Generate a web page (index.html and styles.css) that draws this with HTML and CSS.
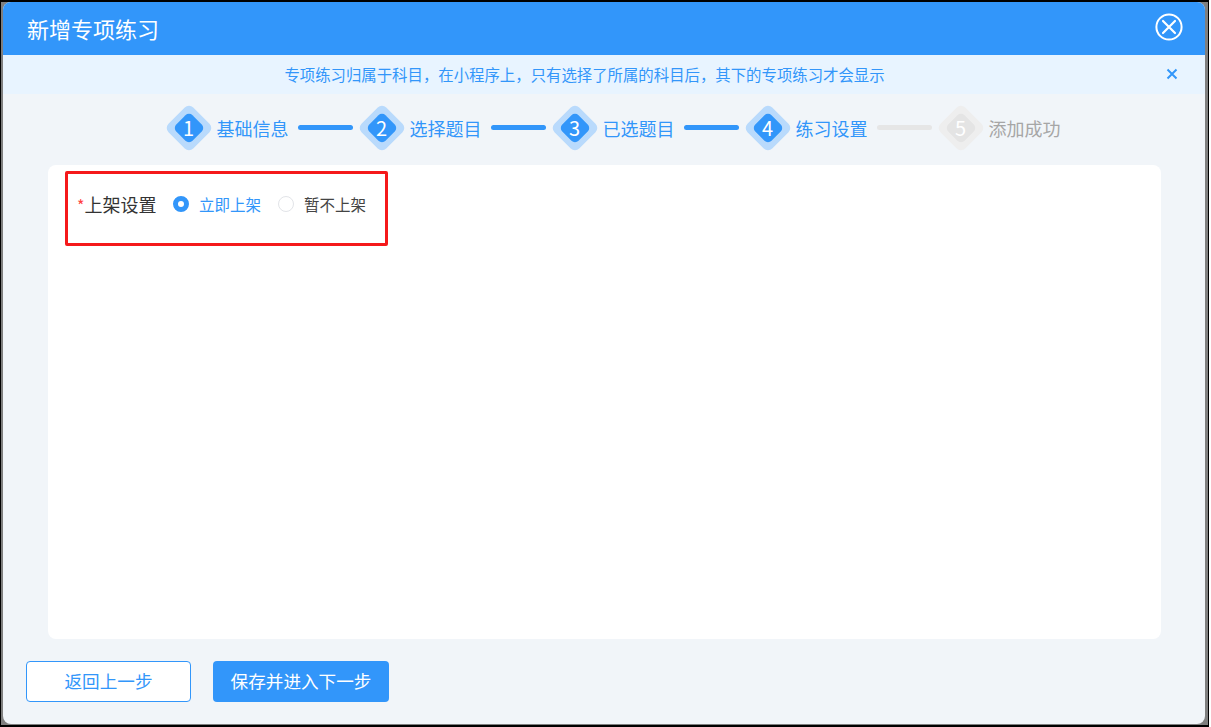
FILE: index.html
```html
<!DOCTYPE html>
<html lang="zh-CN">
<head>
    <meta charset="UTF-8" />
    <title>新增专项练习</title>
    <link rel="stylesheet" href="styles.css">
</head>
<body>
    <div class="dialog">
        <header class="dialog-head">
            <h1>新增专项练习</h1>
            <svg class="head-close" width="28" height="28" viewBox="0 0 28 28">
                <circle cx="14" cy="14" r="12.6" fill="none" stroke="#fff" stroke-width="2"/>
                <path d="M8 8 L20 20 M20 8 L8 20" stroke="#fff" stroke-width="2.2" stroke-linecap="round"/>
            </svg>
        </header>

        <div class="notice">
            <p>专项练习归属于科目，在小程序上，只有选择了所属的科目后，其下的专项练习才会显示</p>
            <svg class="notice-close" width="12" height="12" viewBox="0 0 12 12">
                <path d="M1.5 1.5 L10.5 10.5 M10.5 1.5 L1.5 10.5" stroke="#3296fa" stroke-width="2"/>
            </svg>
        </div>

        <div class="steps">
            <div class="step"><span class="num">1</span><span class="name">基础信息</span></div>
            <div class="line"></div>
            <div class="step"><span class="num">2</span><span class="name">选择题目</span></div>
            <div class="line"></div>
            <div class="step"><span class="num">3</span><span class="name">已选题目</span></div>
            <div class="line"></div>
            <div class="step"><span class="num">4</span><span class="name">练习设置</span></div>
            <div class="line off"></div>
            <div class="step off"><span class="num">5</span><span class="name">添加成功</span></div>
        </div>

        <main class="card">
            <div class="mark-box">
                <span class="label"><i>*</i>上架设置</span>
                <label class="radio on"><span class="dot"></span>立即上架</label>
                <label class="radio"><span class="dot"></span>暂不上架</label>
            </div>
        </main>

        <footer class="actions">
            <button class="btn ghost">返回上一步</button>
            <button class="btn primary">保存并进入下一步</button>
        </footer>
    </div>
</body>
</html>
```

FILE: styles.css
```css
* {
    box-sizing: border-box;
}
html {
    background: #fff;
}
body {
    position: relative;
    width: 1209px;
    height: 727px;
    margin: 0;
    padding: 0 3px 1px 2px;
    border-style: solid;
    border-color: #000;
    border-width: 2px 1px;
    background: #7f7f7f;
    font-family: "Noto Sans CJK SC", "Noto Sans", sans-serif;
    overflow: hidden;
}
/* bits of the page under the mask, cut off by the window edge */
body::after {
    content: "";
    position: absolute;
    left: 167px;
    bottom: -2px;
    width: 69px;
    height: 2px;
    background: linear-gradient(90deg, #c00 13px, transparent 13px, transparent 25px, #c00 25px);
}
.dialog {
    width: 1202px;
    height: 722px;
    display: flex;
    flex-direction: column;
    background: #f1f5f9;
    border-radius: 8px;
    overflow: hidden;
}
.dialog-head {
    height: 53px;
    flex: none;
    display: flex;
    align-items: center;
    justify-content: space-between;
    padding: 0 22px 3px 24px;
    background: #3296fa;
    color: #fff;
}
.dialog-head h1 {
    margin: 2px 0 0;
    font-size: 22px;
    font-weight: 400;
}
.notice {
    height: 39px;
    flex: none;
    display: flex;
    align-items: center;
    padding: 0 27px 2px 0;
    background: #e8f4ff;
    color: #3296fa;
    font-size: 15.4px;
}
.notice p {
    flex: 1;
    margin: 0;
    text-align: center;
}
.steps {
    height: 71px;
    flex: none;
    display: flex;
    align-items: center;
    padding: 0 0 4px 162.5px;
}
.step {
    display: flex;
    align-items: center;
    gap: 5px;
    color: #3296fa;
    font-size: 18px;
}
.step.off {
    color: #a6a6a6;
}
.num {
    position: relative;
    z-index: 0;
    width: 46px;
    height: 46px;
    display: grid;
    place-items: center;
    color: #fff;
    font-size: 20px;
}
.num::before,
.num::after {
    content: "";
    position: absolute;
    left: 50%;
    top: 50%;
    transform: translate(-50%, -50%) rotate(45deg);
}
.num::before {
    z-index: -2;
    width: 35px;
    height: 35px;
    border-radius: 6px;
    background: #b9dafc;
}
.num::after {
    z-index: -1;
    width: 23px;
    height: 23px;
    border-radius: 5px;
    background: #3296fa;
}
.step.off .num::before {
    background: #eeeeee;
}
.step.off .num::after {
    background: #e4e4e4;
}
.line {
    width: 55px;
    height: 5px;
    margin: 0 6px 0 9px;
    border-radius: 3px;
    background: #3296fa;
}
.line.off {
    background: #e6e6e6;
}
.card {
    width: 1113px;
    height: 474px;
    flex: none;
    margin-left: 45px;
    padding: 6px 0 0 17px;
    background: #fff;
    border-radius: 8px;
}
.mark-box {
    width: 323px;
    height: 75px;
    display: flex;
    align-items: flex-start;
    padding: 17px 0 0 9px;
    border: 3px solid #f5191b;
    border-radius: 2px;
    color: #333;
}
.label {
    width: 96px;
    font-size: 18px;
    line-height: 26px;
}
.label i {
    color: #ff4040;
    font-style: normal;
    font-size: 16px;
}
.radio {
    display: flex;
    align-items: center;
    gap: 10px;
    height: 26px;
    margin-right: 17px;
    font-size: 15.5px;
    color: #444;
}
.radio.on {
    color: #3296fa;
}
.dot {
    width: 16px;
    height: 16px;
    border: 1px solid #e2e4e8;
    border-radius: 50%;
    background: #fff;
}
.radio.on .dot {
    border: 5px solid #3296fa;
}
.actions {
    display: flex;
    gap: 22px;
    padding: 22px 0 0 23px;
}
.btn {
    height: 41px;
    padding: 0 0 3px;
    border-radius: 4px;
    font-family: inherit;
    font-size: 17.6px;
}
.ghost {
    width: 165px;
    border: 1px solid #3296fa;
    background: #fff;
    color: #3296fa;
}
.primary {
    width: 176px;
    border: none;
    background: #3296fa;
    color: #fff;
}
```
